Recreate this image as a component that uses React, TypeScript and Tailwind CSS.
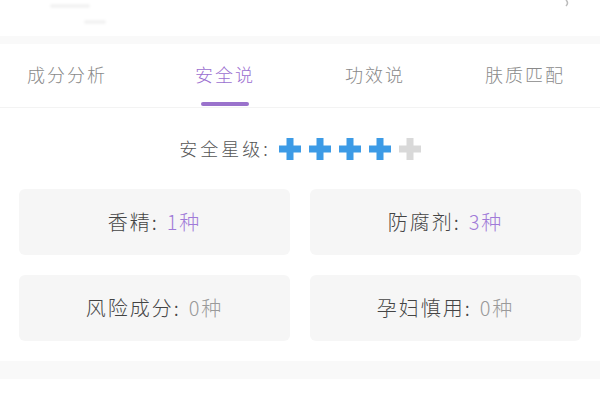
const tabs = ["成分分析", "安全说", "功效说", "肤质匹配"]

const items = [
  { label: "香精", value: "1种", active: true },
  { label: "防腐剂", value: "3种", active: true },
  { label: "风险成分", value: "0种", active: false },
  { label: "孕妇慎用", value: "0种", active: false },
]

const Cross = ({ color }: { color: string }) => (
  <svg width="22" height="22" viewBox="0 0 22 22">
    <path d="M7.5 0h7v7.5H22v7h-7.5V22h-7v-7.5H0v-7h7.5z" fill={color} />
  </svg>
)

const App = () => {
  return (
    <div
      className="h-[400px] w-[600px] overflow-hidden bg-white"
      style={{ fontFamily: '"Noto Sans CJK SC", "Noto Sans", sans-serif' }}
    >
      {/* Header */}
      <div className="relative h-[36px] bg-white">
        <span className="absolute left-[50px] top-[4px] h-[4px] w-[40px] rounded-full bg-[#f3f3f3] blur-[1px]" />
        <span className="absolute left-[84px] top-[20px] h-[4px] w-[22px] rounded-full bg-[#f3f3f3] blur-[1px]" />
        <svg
          className="absolute right-[28px] top-0"
          width="8"
          height="8"
          viewBox="0 0 8 8"
        >
          <path d="M2 0 Q5 3 2 6" stroke="#bbbbbb" strokeWidth="1.5" fill="none" />
        </svg>
      </div>
      <div className="h-[8px] bg-[#f9f9f9]" />

      {/* Tabs */}
      <div className="grid h-[64px] grid-cols-4 border-b border-[#f3f3f3]">
        {tabs.map((tab, index) => (
          <div
            key={tab}
            className={`relative flex items-center justify-center pb-[2px] text-[18px] font-light tracking-[2px] ${
              index === 0 ? "pr-[16px]" : ""
            } ${index === 1 ? "text-[#9b6fd0]" : "text-[#8a8a8a]"}`}
          >
            {tab}
            {index === 1 && (
              <span className="absolute bottom-[1px] left-1/2 h-[4px] w-[48px] -translate-x-1/2 rounded-full bg-[#9a72cc]" />
            )}
          </div>
        ))}
      </div>

      {/* Safety level */}
      <div className="flex h-[81px] items-center justify-center gap-[8px]">
        <span className="text-[18px] font-light tracking-[3px] text-[#555555]">
          安全星级:
        </span>
        <div className="flex gap-[8px]">
          {[0, 1, 2, 3, 4].map(i => (
            <Cross key={i} color={i < 4 ? "#3d9be6" : "#d9d9d9"} />
          ))}
        </div>
      </div>

      {/* Cards */}
      <div className="grid grid-cols-2 gap-x-[20px] gap-y-[20px] px-[19px]">
        {items.map(item => (
          <div
            key={item.label}
            className="flex h-[66px] items-center justify-center rounded-md bg-[#f6f6f6] text-[20px] font-light tracking-[2px]"
          >
            <span className="text-[#444444]">{item.label}:</span>
            <span
              className={`ml-[8px] ${
                item.active ? "text-[#a07ad8]" : "text-[#9a9a9a]"
              }`}
            >
              {item.value}
            </span>
          </div>
        ))}
      </div>

      {/* Bottom band */}
      <div className="mt-[20px] h-[18px] bg-[#f9f9f9]" />
    </div>
  )
}

export default App
